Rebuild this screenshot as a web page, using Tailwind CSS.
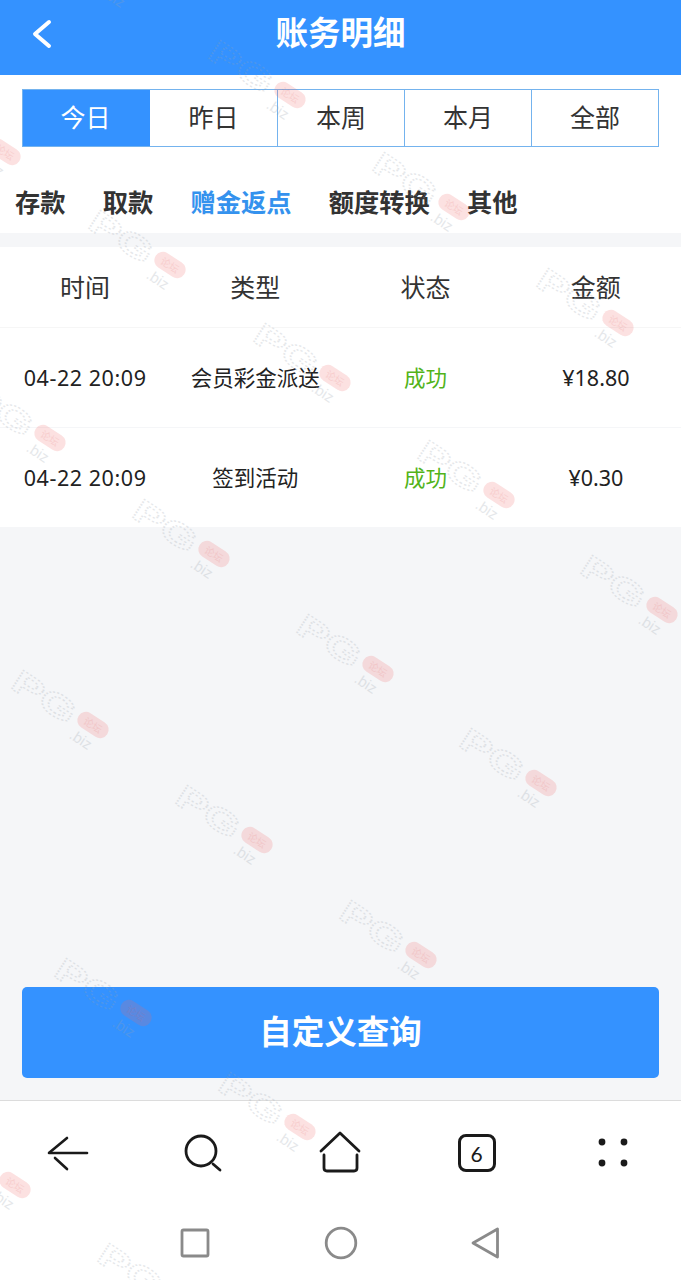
<!doctype html>
<html lang="zh">
<head>
<meta charset="utf-8">
<script src="https://cdn.jsdelivr.net/npm/@tailwindcss/browser@4"></script>
<title>账务明细</title>
</head>
<body class="m-0 bg-white">
<div class="relative w-[681px] h-[1280px] overflow-hidden flex flex-col bg-[#f5f6f8] font-['Noto_Sans','Noto_Sans_CJK_SC',sans-serif]">
  <header class="h-[75px] shrink-0 bg-[#3492ff] flex items-center justify-center relative">
    <svg class="absolute left-[24px] top-[14px]" width="36" height="40" viewBox="0 0 36 40" fill="none" stroke="white" stroke-width="4" stroke-linecap="round" stroke-linejoin="round"><path d="M25 8 L11 20 L25 32"/></svg>
    <h1 class="text-white text-[32.5px] font-bold leading-none m-0 -mt-[8px]">账务明细</h1>
  </header>

  <div class="bg-white h-[158px] shrink-0 flex flex-col">
    <div class="mt-[14px] mx-[22px] h-[58px] grid grid-cols-5 border border-[#74b3ee] text-[25px] text-[#333] leading-none">
      <div class="bg-[#3492ff] text-white flex items-center justify-center pb-[2px] pr-[2px]">今日</div>
      <div class="flex items-center justify-center pb-[2px]">昨日</div>
      <div class="border-l border-[#74b3ee] flex items-center justify-center pb-[2px]">本周</div>
      <div class="border-l border-[#74b3ee] flex items-center justify-center pb-[2px]">本月</div>
      <div class="border-l border-[#74b3ee] flex items-center justify-center pb-[2px]">全部</div>
    </div>
    <div class="flex-1 flex items-center gap-[37.25px] pl-[15px] text-[25.25px] font-bold text-[#333] leading-none pt-[25px]">
      <span>存款</span><span>取款</span><span class="text-[#3492ee]">赠金返点</span><span>额度转换</span><span>其他</span>
    </div>
  </div>

  <div class="mt-[14px] bg-white shrink-0 text-center">
    <div class="grid grid-cols-4 h-[81px] items-center text-[25px] text-[#333] border-b border-[#f6f6f6] leading-none">
      <span>时间</span><span>类型</span><span>状态</span><span>金额</span>
    </div>
    <div class="grid grid-cols-4 h-[100px] items-center text-[21.5px] text-[#222] border-b border-[#f5f6f8] leading-none">
      <span class="tracking-[0.55px]">04-22 20:09</span><span>会员彩金派送</span><span class="text-[#52b31a]">成功</span><span>¥18.80</span>
    </div>
    <div class="grid grid-cols-4 h-[99px] items-center text-[21.5px] text-[#222] leading-none">
      <span class="tracking-[0.55px]">04-22 20:09</span><span>签到活动</span><span class="text-[#52b31a]">成功</span><span>¥0.30</span>
    </div>
  </div>

  <div class="flex-1 flex flex-col justify-end px-[22px] pb-[22px]">
    <button class="h-[91px] w-full rounded-[5px] bg-[#3492ff] text-white text-[32.5px] font-bold leading-none">自定义查询</button>
  </div>

  <nav class="h-[105px] shrink-0 bg-white border-t border-[#dcdcdc] grid grid-cols-5 items-center justify-items-center">
    <svg width="44" height="44" viewBox="0 0 44 44" fill="none" stroke="#1a1a1a" stroke-width="2.6" stroke-linecap="round" stroke-linejoin="round"><path d="M3 22 H41"/><path d="M21 7 L3.5 21.5"/><path d="M9 27 L21 38"/></svg>
    <svg width="44" height="44" viewBox="0 0 44 44" fill="none" stroke="#1a1a1a" stroke-width="2.8" stroke-linecap="round"><circle cx="19" cy="20" r="15"/><path d="M31 33 L38 39"/></svg>
    <svg width="44" height="44" viewBox="0 0 44 44" fill="none" stroke="#1a1a1a" stroke-width="2.8" stroke-linecap="round" stroke-linejoin="round"><path d="M3 20 L22 2 L41 20"/><path d="M6 24 V37 Q6 40 9 40 H36 Q39 40 39 37 V24"/></svg>
    <div class="w-[38px] h-[38px] rounded-[8px] border-[3px] border-[#1a1a1a] flex items-center justify-center text-[21px] text-[#1a1a1a] leading-none font-['Lato','Noto_Sans',sans-serif]">6</div>
    <svg width="44" height="44" viewBox="0 0 44 44" fill="#1a1a1a"><circle cx="11" cy="11" r="3.4"/><circle cx="33" cy="11" r="3.4"/><circle cx="11" cy="32" r="3.4"/><circle cx="33" cy="32" r="3.4"/></svg>
  </nav>

  <div class="h-[75px] shrink-0 bg-white flex items-start justify-center gap-[101px] pt-[16px]">
    <svg width="44" height="44" viewBox="0 0 44 44" fill="none" stroke="#8a8a8a" stroke-width="2.8" stroke-linejoin="round"><rect x="8" y="9" width="26" height="26" rx="1.5"/></svg>
    <svg width="44" height="44" viewBox="0 0 44 44" fill="none" stroke="#8a8a8a" stroke-width="2.8"><circle cx="22" cy="22" r="14.8"/></svg>
    <svg width="44" height="44" viewBox="0 0 44 44" fill="none" stroke="#8a8a8a" stroke-width="2.8" stroke-linejoin="round"><path d="M9 22 L33.5 8 V36 Z"/></svg>
  </div>

  <svg class="absolute inset-0 pointer-events-none" width="681" height="1280" viewBox="0 0 681 1280">
    <defs>
      <g id="wm">
        <g transform="rotate(33)">
          <text x="-91" y="14" textLength="70" lengthAdjust="spacingAndGlyphs" font-family="Liberation Sans, sans-serif" font-size="32" font-weight="700" fill="none" stroke="#9aa3ad" stroke-width="1.3" stroke-dasharray="1.5 1.5" opacity="0.25">PG</text>
          <text x="-14" y="24" font-family="Liberation Sans, sans-serif" font-size="15" fill="#9aa3ad" opacity="0.25">.biz</text>
          <rect x="-17" y="-8.5" width="34" height="17" rx="8.5" fill="#f26a6a" opacity="0.2"/>
          <text x="0" y="4" text-anchor="middle" font-family="Noto Sans CJK SC, sans-serif" font-size="10" fill="#e06060" opacity="0.15">论坛</text>
        </g>
      </g>
    </defs>
    <use href="#wm" x="126" y="-17"/>
    <use href="#wm" x="290" y="95"/>
    <use href="#wm" x="454" y="207"/>
    <use href="#wm" x="618" y="323"/>
    <use href="#wm" x="5" y="152"/>
    <use href="#wm" x="170" y="265"/>
    <use href="#wm" x="335" y="378"/>
    <use href="#wm" x="499" y="495"/>
    <use href="#wm" x="662" y="610"/>
    <use href="#wm" x="50" y="438"/>
    <use href="#wm" x="214" y="554"/>
    <use href="#wm" x="378" y="669"/>
    <use href="#wm" x="541" y="783"/>
    <use href="#wm" x="93" y="725"/>
    <use href="#wm" x="257" y="840"/>
    <use href="#wm" x="421" y="955"/>
    <use href="#wm" x="136" y="1013"/>
    <use href="#wm" x="300" y="1127"/>
    <use href="#wm" x="15" y="1185"/>
    <use href="#wm" x="179" y="1298"/>
  </svg>
</div>
</body>
</html>
